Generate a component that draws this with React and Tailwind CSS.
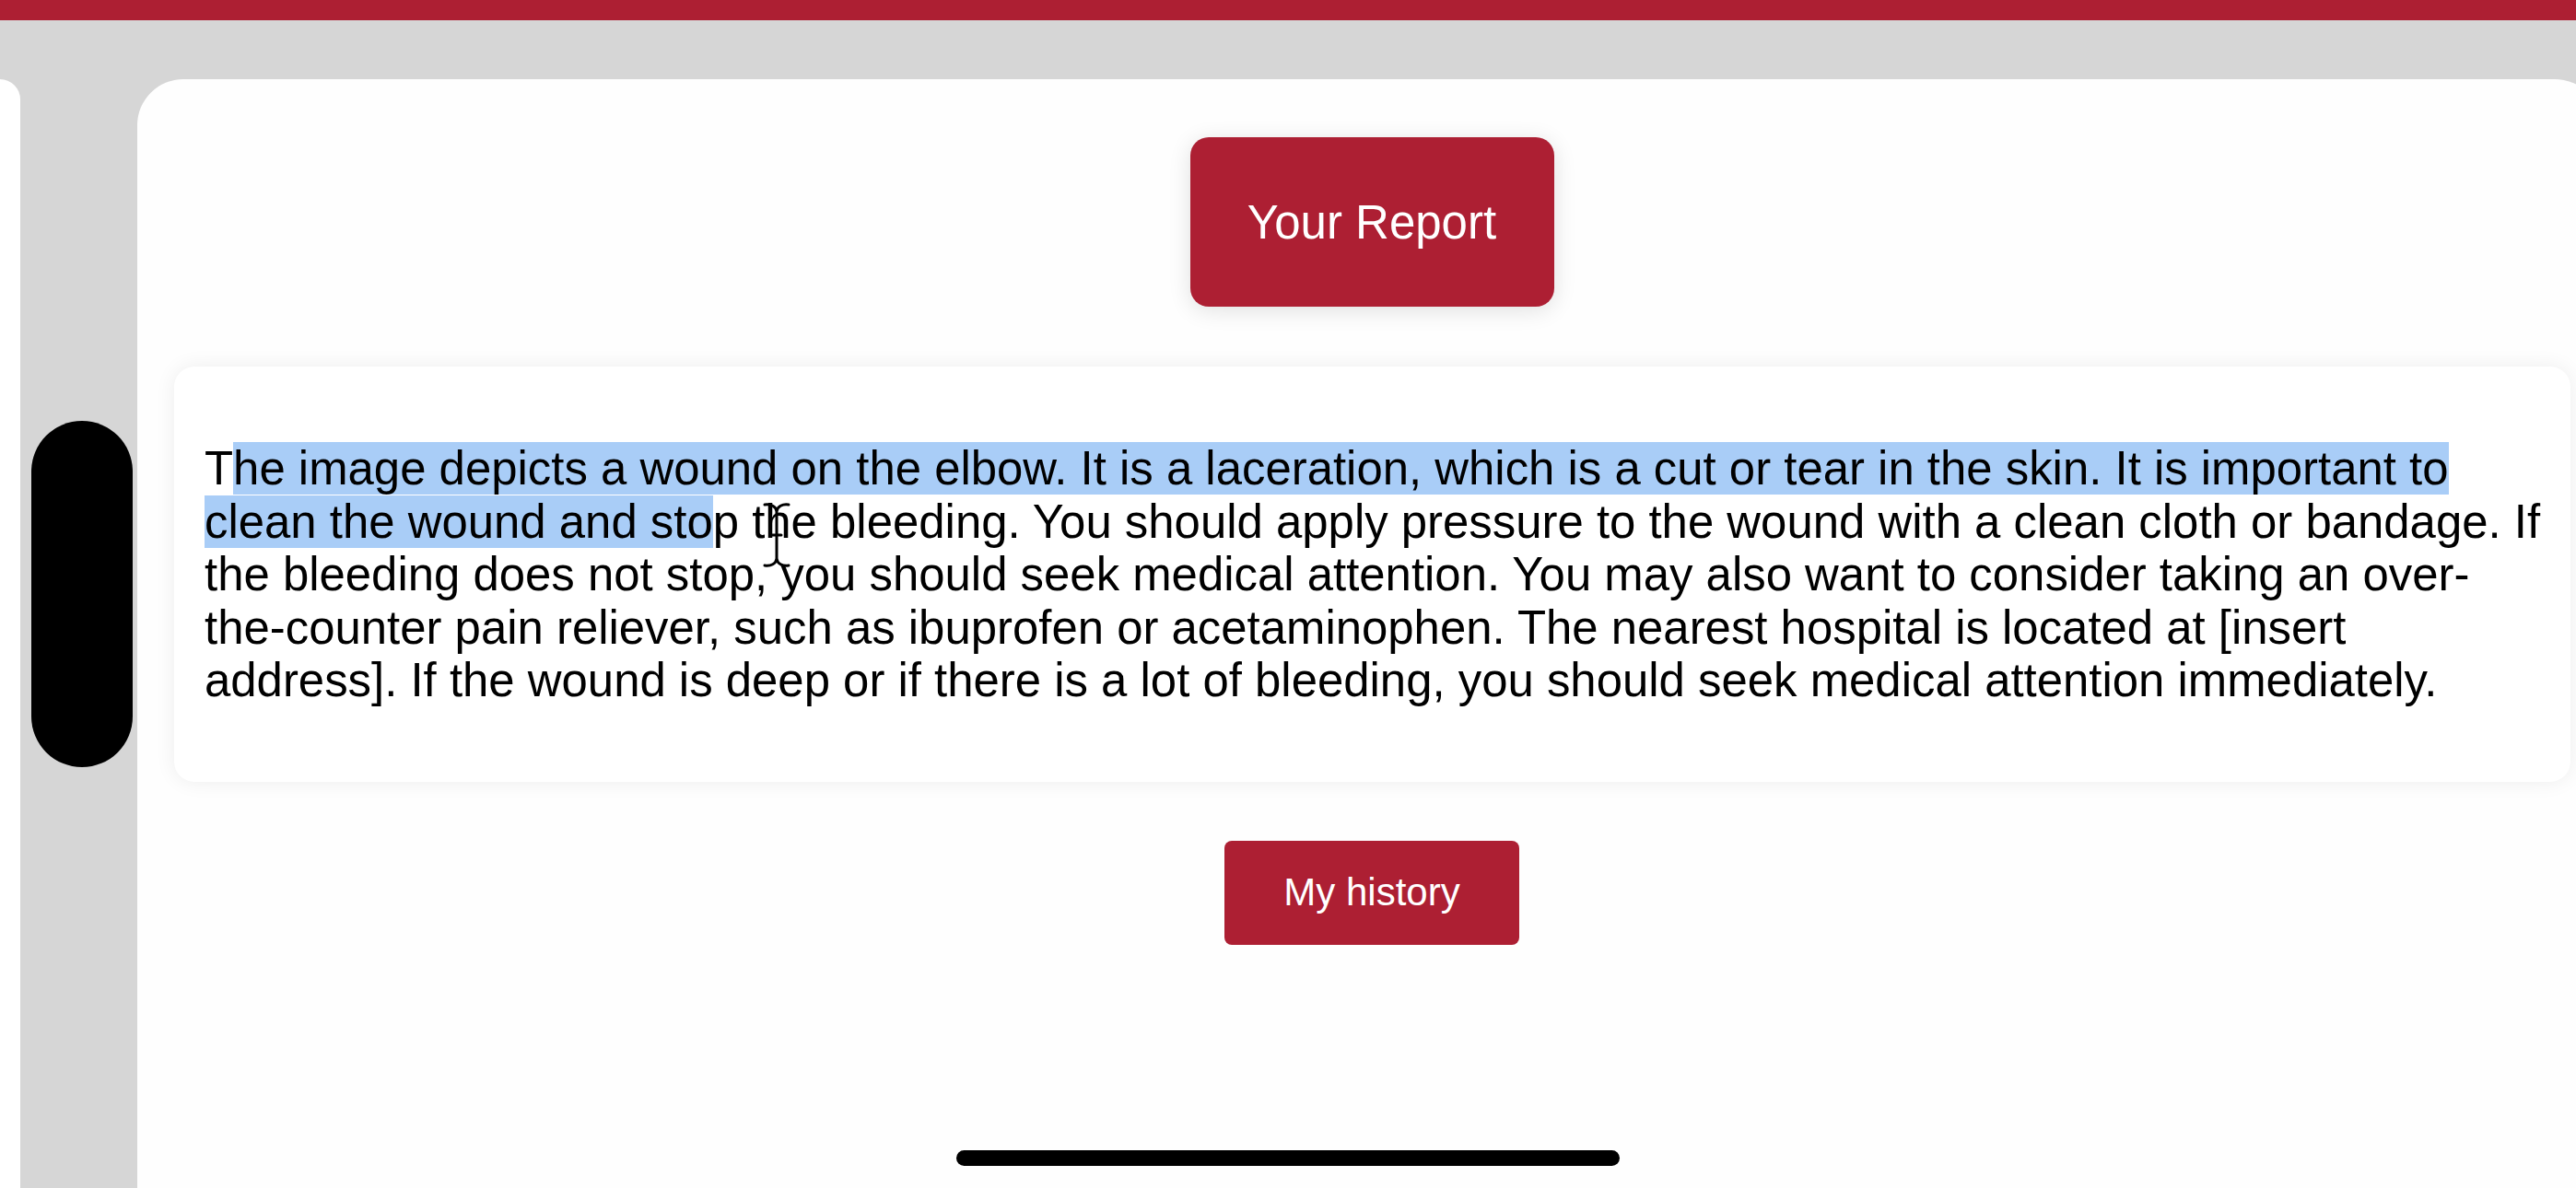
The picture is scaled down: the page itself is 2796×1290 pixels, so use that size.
import React from "react";

const RED = "bg-[#ad1f33]";

const TextCursor = () => (
    <svg
        className="absolute left-[827px] top-[545px]"
        width="32"
        height="72"
        viewBox="0 0 32 72"
        fill="none"
        stroke="#000"
        strokeWidth="3"
        strokeLinecap="round"
    >
        {/* I-beam text cursor */}
        <path d="M3 3 C10 2 15 5 16 10 C17 5 22 2 29 3" />
        <path d="M16 10 L16 62" />
        <path d="M11 36 L21 36" />
        <path d="M3 69 C10 70 15 67 16 62 C17 67 22 70 29 69" />
    </svg>
);

const ReportPage = () => {
    return (
        <div className="relative w-[2796px] h-[1290px] overflow-hidden bg-[#d6d6d6] flex flex-col font-['Liberation_Sans',Arial,sans-serif]">
            {/* top bar */}
            <div className={`h-[22px] shrink-0 ${RED}`} />

            <div className="flex flex-1 pt-[64px]">
                {/* left panel edge */}
                <div className="w-[22px] shrink-0 bg-white rounded-tr-[50px]" />

                {/* gutter with handle */}
                <div className="w-[127px] shrink-0 pl-[12px] pt-[371px]">
                    <div className="w-[110px] h-[376px] rounded-full bg-black" />
                </div>

                {/* main sheet */}
                <div className="w-[2674px] shrink-0 bg-[#fefefe] rounded-t-[50px] flex flex-col items-center pt-[63px] pl-[6px]">
                    <button className={`w-[395px] h-[184px] rounded-[20px] ${RED} text-white text-[51px] leading-none shadow-[0_4px_24px_rgba(0,0,0,0.12)]`}>
                        Your Report
                    </button>

                    <div className="self-stretch ml-[34px] mr-[33px] mt-[65px] bg-white rounded-[22px] shadow-[0_0_22px_rgba(0,0,0,0.07)] pl-[33px] pr-[22px] pt-[82px] pb-[81px]">
                        <p className="text-[50.9px] leading-[57.5px] text-black">
                            T
                            <span className="bg-[#a9cdf7]">
                                he image depicts a wound on the elbow. It is a laceration, which is a cut or tear in the skin. It is important to clean the wound and sto
                            </span>
                            p the bleeding. You should apply pressure to the wound with a clean cloth or bandage. If the bleeding does not stop, you should seek medical attention. You may also want to consider taking an over-the-counter pain reliever, such as ibuprofen or acetaminophen. The nearest hospital is located at [insert address]. If the wound is deep or if there is a lot of bleeding, you should seek medical attention immediately.
                        </p>
                    </div>

                    <button className={`mt-[64px] w-[320px] h-[113px] rounded-[8px] ${RED} text-white text-[42px] leading-none`}>
                        My history
                    </button>
                </div>
            </div>

            <TextCursor />

            {/* home indicator */}
            <div className="absolute left-[1038px] top-[1249px] w-[720px] h-[17px] rounded-full bg-black" />
        </div>
    );
};

export default function App() {
    return <ReportPage />;
}
